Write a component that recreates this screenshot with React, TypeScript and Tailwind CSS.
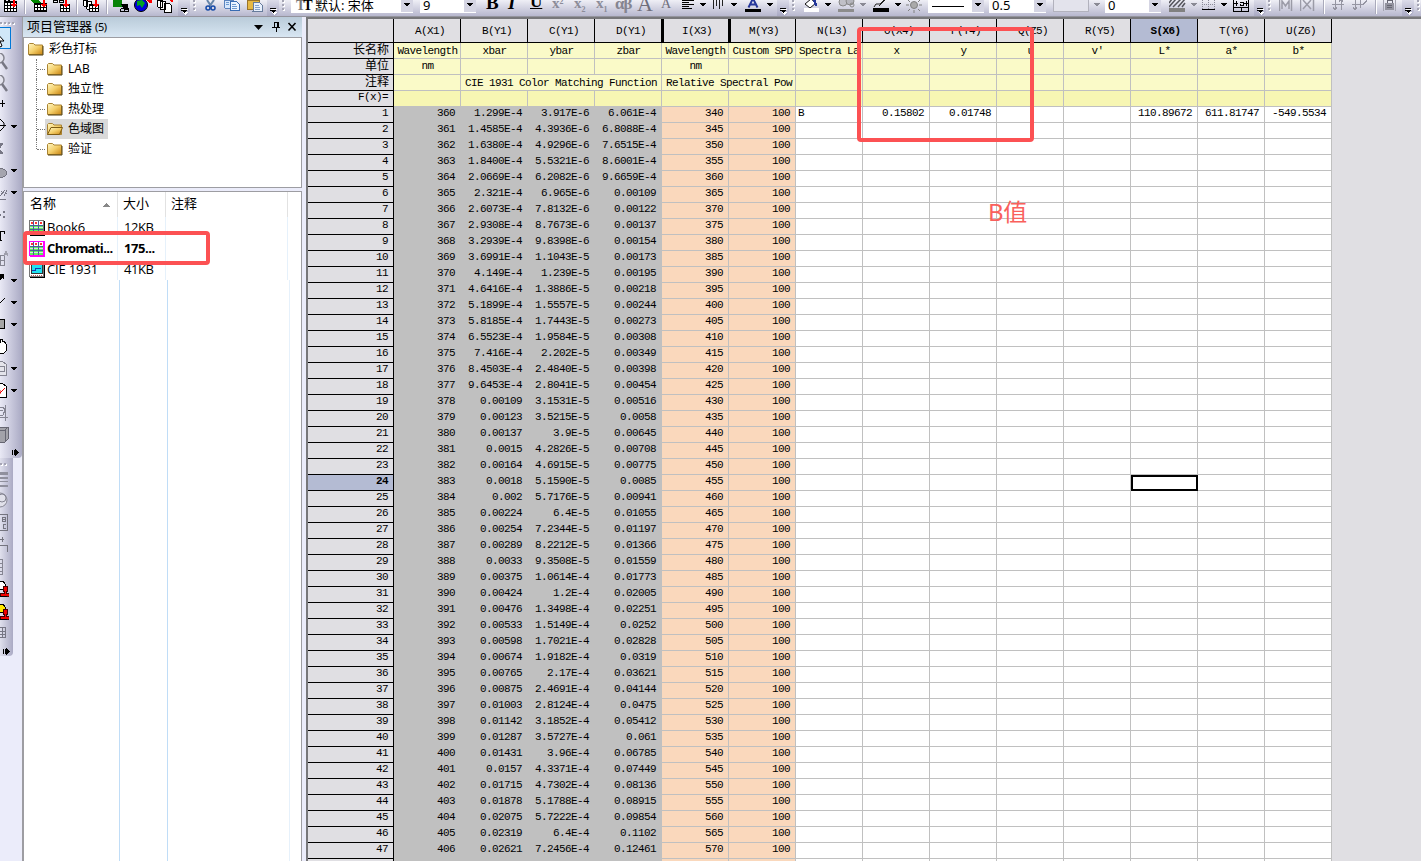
import React from 'react';
import clsx from 'clsx';

type Slot = [number, React.ReactNode];

const cjk = "font-['Noto_Sans','Noto_Sans_CJK_SC',sans-serif]";
const mono = "font-['Liberation_Mono','Noto_Sans_CJK_SC',monospace]";

const xbar = '1.299E-4 1.4585E-4 1.6380E-4 1.8400E-4 2.0669E-4 2.321E-4 2.6073E-4 2.9308E-4 3.2939E-4 3.6991E-4 4.149E-4 4.6416E-4 5.1899E-4 5.8185E-4 6.5523E-4 7.416E-4 8.4503E-4 9.6453E-4 0.00109 0.00123 0.00137 0.0015 0.00164 0.0018 0.002 0.00224 0.00254 0.00289 0.0033 0.00375 0.00424 0.00476 0.00533 0.00598 0.00674 0.00765 0.00875 0.01003 0.01142 0.01287 0.01431 0.0157 0.01715 0.01878 0.02075 0.02319 0.02621'.split(' ');
const ybar = '3.917E-6 4.3936E-6 4.9296E-6 5.5321E-6 6.2082E-6 6.965E-6 7.8132E-6 8.7673E-6 9.8398E-6 1.1043E-5 1.239E-5 1.3886E-5 1.5557E-5 1.7443E-5 1.9584E-5 2.202E-5 2.4840E-5 2.8041E-5 3.1531E-5 3.5215E-5 3.9E-5 4.2826E-5 4.6915E-5 5.1590E-5 5.7176E-5 6.4E-5 7.2344E-5 8.2212E-5 9.3508E-5 1.0614E-4 1.2E-4 1.3498E-4 1.5149E-4 1.7021E-4 1.9182E-4 2.17E-4 2.4691E-4 2.8124E-4 3.1852E-4 3.5727E-4 3.96E-4 4.3371E-4 4.7302E-4 5.1788E-4 5.7222E-4 6.4E-4 7.2456E-4'.split(' ');
const zbar = '6.061E-4 6.8088E-4 7.6515E-4 8.6001E-4 9.6659E-4 0.00109 0.00122 0.00137 0.00154 0.00173 0.00195 0.00218 0.00244 0.00273 0.00308 0.00349 0.00398 0.00454 0.00516 0.0058 0.00645 0.00708 0.00775 0.0085 0.00941 0.01055 0.01197 0.01366 0.01559 0.01773 0.02005 0.02251 0.0252 0.02828 0.0319 0.03621 0.04144 0.0475 0.05412 0.061 0.06785 0.07449 0.08136 0.08915 0.09854 0.1102 0.12461'.split(' ');

const columns = ['A(X1)', 'B(Y1)', 'C(Y1)', 'D(Y1)', 'I(X3)', 'M(Y3)', 'N(L3)', 'O(X4)', 'P(Y4)', 'Q(Z5)', 'R(Y5)', 'S(X6)', 'T(Y6)', 'U(Z6)'];
const longNames = ['Wavelength', 'xbar', 'ybar', 'zbar', 'Wavelength', 'Custom SPD', 'Spectra La', 'x', 'y', 'u', 'v′', 'L*', 'a*', 'b*'];
const units = ['nm', '', '', '', 'nm', '', '', '', '', '', '', '', '', ''];
const firstRow = ['B', '0.15802', '0.01748', '', '', '110.89672', '611.81747', '-549.5534'];

const Svg = ({ w, h = 16, children }: { w: number; h?: number; children: React.ReactNode }) => (
    <svg width={w} height={h} viewBox={`0 0 ${w} ${h}`} className="block shrink-0" fill="none" shapeRendering="crispEdges">
        {children}
    </svg>
);

/* ---- top toolbar pieces ---- */

const RedArrow = ({ x }: { x: number }) => <path d={`M${x + 2} 0h2v4h2l-3 4l-3 -4h2z`} fill="#f00" />;

const SheetGrid = ({ x, y, w, h }: { x: number; y: number; w: number; h: number }) => (
    <g>
        <rect x={x} y={y} width={w} height={h} fill="#000" />
        {Array.from({ length: Math.floor((h - 1) / 3) }).map((_, r) =>
            Array.from({ length: Math.floor((w - 1) / 3) }).map((_, c) => (
                <rect key={`${r}-${c}`} x={x + 1 + c * 3} y={y + 2 + r * 3} width={2} height={2} fill="#fff" />
            ))
        )}
    </g>
);

const Drop = ({ gray = false }) => (
    <Svg w={8}><path d="M0 3h6v1h-1v1h-1v1h-2v-1h-1v-1h-1z" fill={gray ? '#8a8a95' : '#000'} /></Svg>
);

const Overflow = () => (
    <div className="h-[16px] w-[12px] bg-gradient-to-b from-[#dcdce9] to-[#a9a9c3] rounded-br-md">
        <Svg w={12}><path d="M4 9h6v1h-6z M5 12h5l-3 3z" fill="#fff" /><path d="M3 8h6v1h-6z M3 10h6v1h-1l-2 2-2-2h-1z" fill="#000" /></Svg>
    </div>
);

const Grip = () => (
    <Svg w={4}>
        {[0, 4, 8].map(y => <g key={y}><rect x="1" y={y + 1} width="2" height="2" fill="#fff" /><rect y={y} width="2" height="2" fill="#a5a5b4" /></g>)}
    </Svg>
);

const Sep = () => <div className="h-[14px] w-[2px] border-l border-[#aaaabb] border-r border-r-white" />;

const Combo = ({ w, text, gray = false, children }: { w: number; text?: string; gray?: boolean; children?: React.ReactNode }) => (
    <div className={clsx('flex justify-between', gray ? 'h-[12px] bg-[#e3e3ec] border border-t-0 border-[#b2b2bd]' : 'h-[13px] bg-white')} style={{ width: w }}>
        <div className={clsx(cjk, 'flex items-center pl-[3px] text-[13px] leading-[10px] h-[9px] whitespace-pre')}>{children}{text}</div>
        {!gray && <div className="w-[12px] h-[12px] bg-[#d5d5e3] pl-[3px]"><Drop /></div>}
    </div>
);

const Glyph = ({ children, className }: { children: React.ReactNode; className?: string }) => (
    <div className={clsx("font-['Liberation_Serif',serif] whitespace-nowrap h-[16px]", className)}>{children}</div>
);

const topBar: Slot[] = [
    [0, null],
    [2, <Svg w={18}><SheetGrid x={2} y={1} w={13} h={11} /><path d="M2 0h2v1h-2z M6 0h2v1h-2z" fill="#000" /><RedArrow x={9} /></Svg>],
    [24, <Sep />],
    [31, <Svg w={18}><path d="M0 0h8l3 4h-6l-4 -2z" fill="#080" /><SheetGrid x={3} y={3} w={13} h={9} /><RedArrow x={10} /></Svg>],
    [53, <Svg w={18}><path d="M0 0h4v2h-4z M6 0h4v2h-4z" stroke="#000" /><SheetGrid x={7} y={4} w={10} h={8} /><RedArrow x={10} /></Svg>],
    [76, <Sep />],
    [83, <Svg w={18}><path d="M0 0h4v6h-3z M3 1h5v8h-4z" fill="#fff" stroke="#000" /><SheetGrid x={6} y={4} w={10} h={8} /><RedArrow x={10} /></Svg>],
    [106, <Sep />],
    [113, <Svg w={18}><path d="M0 0h9v7h-9z" fill="#078307" /><path d="M8 8h7v3h-8v-2M11 6v6" stroke="#000" /><path d="M8 4h7v6h-4z" fill="#000" /></Svg>],
    [134, <Svg w={20}><g shapeRendering="auto"><circle cx="7" cy="5" r="6.5" fill="#0000df" stroke="#000" /><path d="M3 1l5 -1 3 3-3 5-2-3-3 1z" fill="#00a321" /></g><path d="M13 0h5v3h-3z" fill="#f00" /></Svg>],
    [157, <Svg w={18}><path d="M0 0h5v7h-4z M3 1h5v8h-5z M7 3h5l2 2v7h-7z" fill="#fff" stroke="#000" /><path d="M12 0h4v2h-2z" fill="#f00" /></Svg>],
    [178, <Overflow />],
    [193, <Grip />],
    [204, <Svg w={14}><g shapeRendering="auto"><path d="M3 0l4 6M10 0l-5 7" stroke="#6685a8" strokeWidth="2" /><circle cx="4" cy="8" r="2" stroke="#174ba8" strokeWidth="1.5" /><circle cx="9" cy="8" r="2" stroke="#174ba8" strokeWidth="1.5" /></g></Svg>],
    [224, <Svg w={17}><path d="M0 0h9v8h-8z" fill="#d6e7fc" stroke="#5a83bd" /><path d="M6 1h6l3 3v6h-9z" fill="#eaf3ff" stroke="#386cb2" /><path d="M8 4h4M8 6h5M8 8h5M2 2h3M2 4h3" stroke="#6d9ad0" /></Svg>],
    [246, <Svg w={18}><path d="M1 0h12v9h-12z" fill="#e6b845" stroke="#9b742a" /><path d="M8 2h5l3 3v6h-9z" fill="#e8f0fc" stroke="#667b9b" /><path d="M9 5h4M9 7h5M9 9h5" stroke="#85a2cc" /></Svg>],
    [267, <Overflow />],
    [282, <Grip />],
    [291, <Combo w={122} text="默认: 宋体"><div className="w-[21px] pl-[2px] pt-[2px] font-['Liberation_Serif',serif] font-bold text-[14px] tracking-[-2px]"><span className="text-[#777]">T</span>T</div></Combo>],
    [420, <Combo w={56} text="9" />],
    [486, <Glyph className="text-[19px] leading-[6px] font-bold">B</Glyph>],
    [508, <Glyph className="text-[19px] leading-[6px] font-bold italic">I</Glyph>],
    [530, <Glyph className="text-[17px] leading-[4px] font-bold underline">U</Glyph>],
    [552, <Glyph className="text-[15px] leading-[7px] font-bold text-[#8c8c99]">x<span className="text-[8px] relative -top-1">2</span></Glyph>],
    [574, <Glyph className="text-[15px] leading-[7px] font-bold text-[#8c8c99]">x<span className="text-[8px] relative top-1">2</span></Glyph>],
    [596, <Glyph className="text-[15px] leading-[7px] font-bold text-[#8c8c99]">x<span className="text-[8px] relative top-1">1</span></Glyph>],
    [615, <Glyph className="text-[17px] leading-[7px] font-bold text-[#858591] tracking-[-1px]">αβ</Glyph>],
    [637, <Glyph className="text-[22px] leading-[7px] text-[#6f6f7c]">A</Glyph>],
    [661, <Glyph className="text-[14px] leading-[8px] text-[#6f6f7c]">A</Glyph>],
    [682, <Svg w={14}><path d="M0 .5h12M0 2.5h7M0 4.5h12M0 6.5h7M0 8.5h10" stroke="#000" /></Svg>],
    [700, <Drop />],
    [712, <Svg w={14}><path d="M1.500 0v9M4.500 0v6M7.500 0v9M10.500 0v6" stroke="#222" /></Svg>],
    [731, <Drop />],
    [745, <Svg w={17}><path d="M3.500 7.500l4.500-9 4.500 9M5 4.500h6" stroke="#26379b" strokeWidth="2" shapeRendering="auto" /><path d="M0 9h16v3h-16z" fill="#000" /></Svg>],
    [767, <Drop />],
    [777, <Overflow />],
    [792, <Grip />],
    [803, <Svg w={18}><path d="M2 4l6 -5 5 4-6 5z" fill="#fff" stroke="#111" shapeRendering="auto" /><path d="M10 0h3l1 6h-2z" fill="#243799" /><path d="M1 8h15v4h-15z" fill="#fff" /></Svg>],
    [825, <Drop />],
    [837, <Svg w={20}><g shapeRendering="auto"><circle cx="6" cy="2" r="4" fill="#c0c0c7" stroke="#888" /><circle cx="13" cy="1" r="4" fill="#b5b5bc" stroke="#888" /><circle cx="15" cy="5" r="2" stroke="#888" /></g><path d="M1 9h16v3h-16z" fill="#8c8c8c" /></Svg>],
    [860, <Drop gray />],
    [872, <Svg w={18}><path d="M2 7l2 -3h4l5 -5M7 6l6 -6" stroke="#222" shapeRendering="auto" /><path d="M1 8h16v4h-16z" fill="#000" /></Svg>],
    [895, <Drop />],
    [906, <Svg w={17}><g shapeRendering="auto"><circle cx="8" cy="5" r="3.500" fill="#aaa" stroke="#808080" /><path d="M0 5h3M13 5h3M2 0l2 2M14 0l-2 2M2 11l2-2M14 11l-2-2M8 10v3" stroke="#808080" /></g></Svg>],
    [928, <Combo w={56}><Svg w={34} h={10}><path d="M1 6.500h32" stroke="#000" /></Svg></Combo>],
    [989, <Combo w={57} text="0.5" />],
    [1053, <Combo w={36} gray />],
    [1094, <Drop gray />],
    [1105, <Combo w={56} text="0" />],
    [1169, <Svg w={17}><path d="M0 3l3-4M0 7l7-8M4 7l8-8M9 7l7-8M13 7l3-4" stroke="#55555c" strokeWidth="1.500" shapeRendering="auto" /><path d="M0 8h16v4h-16z" fill="#808080" /></Svg>],
    [1191, <Drop gray />],
    [1202, <Svg w={14}><path d="M.5 0v9M6.500 0v9M12.500 0v9M0 4.500h13" stroke="#8a8a98" strokeDasharray="1 1" /><path d="M0 9.500h13" stroke="#000" /></Svg>],
    [1221, <Drop />],
    [1233, <Svg w={17}><path d="M.5 0v11.500h15v-11.500M0 7.500h16M8 8v4M0 3.500h5M11 3.500h5M3 1v5M13 1v5M7 2.500h3v3h-3v-2" stroke="#000" /></Svg>],
    [1254, <Overflow />],
    [1268, <Grip />],
    [1279, <Svg w={14}><path d="M.5 0v11M12.500 0v11M3 9v-8l3.500 5 3.500-5v8" stroke="#9b9ba7" strokeWidth="1.500" shapeRendering="auto" /></Svg>],
    [1300, <Svg w={16}><path d="M.5 0v11M13.500 0v11M3 0l8 9M11 0l-8 9" stroke="#9b9ba7" strokeWidth="1.500" shapeRendering="auto" /></Svg>],
    [1323, <Sep />],
    [1332, <Svg w={14}><path d="M3 0v10M9 0v10M0 4.500h12M1 7l2 3 2-3M7 2l2-3 2 3" stroke="#9595a2" /></Svg>],
    [1352, <Svg w={18}><path d="M3 0v10M8 0v8M0 4.500h11l4-4M1 7l2 3 2-3" stroke="#9595a2" /></Svg>],
    [1375, <Sep />],
    [1383, <Svg w={15}><path d="M.5 0v11M12.500 0v11" stroke="#a4a4b1" /><path d="M2 3h9v7h-9z" fill="#92929e" /><path d="M4 3v-3h5v3M4 5.500h5M4 7.500h5" stroke="#666672" /></Svg>],
    [1402, <Overflow />],
    [1417, <Grip />],
];

/* ---- left toolbar pieces, keyed by their top ---- */

const Tip = () => <path d="M11 7h6v1h-1v1h-1v1h-2v-1h-1v-1h-1z" fill="#000" />;
const HGrip = ({ n }: { n: number }) => (
    <Svg w={16} h={4}>{Array.from({ length: n }).map((_, i) => <g key={i}><rect x={i * 4 + 1} y="1" width="2" height="2" fill="#fff" /><rect x={i * 4} width="2" height="2" fill="#a5a5b4" /></g>)}</Svg>
);
const Magnifier = () => (
    <Svg w={10} h={18}><g shapeRendering="auto"><circle cx="-1" cy="5" r="5" fill="#e4e4ee" stroke="#84848e" strokeWidth="1.500" /><path d="M2 9l5 7" stroke="#777783" strokeWidth="2.500" /></g></Svg>
);
const More = () => <Svg w={8} h={8}><path d="M0 1h1v5h-1z M2 1h1v5h-1z M3 0l4 3.500-4 3.500z" fill="#000" /></Svg>;
const Stamp = ({ color }: { color: string }) => (
    <Svg w={9} h={17}><path d="M-2 0h5l2 3v5h-7z" fill={color} stroke="#000" /><path d="M3 5h4v5h-1v2h3v3h-9v-3h4v-2h-1z" fill="#f00000" stroke="#400" /><path d="M0 15.500h7" stroke="#000" /></Svg>
);

const leftBar: Slot[] = [
    [0, null],
    [5, <HGrip n={4} />],
    [10, <div className="w-[11px] h-[22px] bg-[#d0e7f8] border border-l-0 border-[#0078d7]"><Svg w={10} h={20}><path d="M-4 0v14l3-3 2 5 2-1-2-5h4z" fill="#fff" stroke="#000" transform="translate(-1 3)" shapeRendering="auto" /></Svg></div>],
    [36, <Magnifier />],
    [58, <Magnifier />],
    [82, <Svg w={8} h={8}><path d="M0 4.500h5M2.500 1v7" stroke="#000" strokeWidth="1" /></Svg>],
    [101, <Svg w={18} h={15}><path d="M-4 1h4l4 4v4l-4 4h-4M-2 7.500h8" stroke="#000" shapeRendering="auto" /><Tip /></Svg>],
    [126, <Svg w={8} h={13}><path d="M-3 1h6M-3 10h6M2 1l-3 5 3 4" stroke="#777785" strokeWidth="1.500" /></Svg>],
    [145, <Svg w={18} h={16}><ellipse cx="0" cy="11" rx="7" ry="4.500" fill="#a5a5ae" stroke="#73737f" /><Tip /></Svg>],
    [167, <Svg w={18} h={17}><path d="M0 12l5-6M4 12l3-6M0 15h6M1 7h1M5 9h2M1 10h1" stroke="#777785" /><Tip /></Svg>],
    [193, <Svg w={8} h={11}><path d="M0 4h1v2h-1z M3 1h2v2h-2z M3 6h2v2h-2z" fill="#777785" /></Svg>],
    [213, <Svg w={8} h={14}><path d="M-5 1h10v3h-1v-2h-3v8h1v1h-4v-1h1v-8h-4z" fill="#000" /></Svg>],
    [233, <Svg w={9} h={17}><path d="M-4 5.500h8v10h-8M-4 10.500h8M.5 5v10" stroke="#858592" /><path d="M4 6l2-5 2 5M5 4h3" stroke="#a0a0ad" /></Svg>],
    [255, <Svg w={18} h={15}><path d="M0 2h4v6l-2-2-2 2z" fill="#000" /><Tip /></Svg>],
    [277, <Svg w={18} h={15}><path d="M-2 8l2 1 5-5" stroke="#000" shapeRendering="auto" /><Tip /></Svg>],
    [299, <Svg w={18} h={15}><path d="M-4 3.500h8v9h-8z" fill="#a5a5a5" stroke="#000" /><Tip /></Svg>],
    [321, <Svg w={8} h={17}><path d="M-2 3l2 1v-3h2v2h2l2 3v7l-2 2h-4l-2-4" fill="#fff" stroke="#000" /></Svg>],
    [343, <Svg w={18} h={17}><path d="M-4 1h6l4 3v11h-10z" fill="#e4e4eb" stroke="#858592" /><path d="M0 6h4v5h-4" stroke="#858592" /><Tip /></Svg>],
    [365, <Svg w={18} h={17}><path d="M-4 1h6l4 3v11h-10z" fill="#fff" stroke="#000" /><path d="M-1 12l6-6M0 8v4" stroke="#f00000" shapeRendering="auto" /><Tip /></Svg>],
    [388, <Svg w={9} h={17}><path d="M5 0v16M0 12.500h8M0 2h3l2 3-2 5h-3M0 5h3" stroke="#858592" /></Svg>],
    [409, <Svg w={9} h={18}><path d="M-4 3l3-2h9v12l-3 3h-9z" fill="#a2a2a9" stroke="#666672" /><path d="M5 4v12M5 4l3-3M0 4h5" stroke="#666672" /></Svg>],
    [432, <div className="pl-[12px]"><More /></div>],
    [441, null],
];

const lowerBar: Slot[] = [
    [0, null],
    [5, <HGrip n={2} />],
    [13, <Svg w={9} h={17}><path d="M0 1h8v3h-8z M0 6h8v2h-8z M0 10h8v1h-8z M0 14h8v2h-8z" fill="#90909d" /></Svg>],
    [34, <Svg w={9} h={18}><g shapeRendering="auto"><circle cx="0" cy="8" r="7" fill="#e1e1ea" stroke="#858592" /><circle cx="2" cy="6" r="4" stroke="#858592" /></g></Svg>],
    [56, <Svg w={9} h={17}><path d="M0 .5h7.500v16h-8M2.500 3v4h3v-4h-3M3 5h2M6 10h-3v4h3" stroke="#74747f" /></Svg>],
    [78, <Svg w={9} h={17}><path d="M0 3.500h4M2 1v5M0 9.500h7.500v6" stroke="#74747f" /></Svg>],
    [101, <Svg w={9} h={17}><path d="M0 .5h2.500v15h-3M0 4h2M0 8h2M0 12h2" stroke="#858592" /></Svg>],
    [123, <Stamp color="#fff" />],
    [146, <Stamp color="#ffe800" />],
    [168, <Svg w={9} h={15}><path d="M0 1.500h5.500v10h-6M0 5h6M0 8h6M2.500 1v10" stroke="#777785" /></Svg>],
    [190, <div className="pl-[3px]"><More /></div>],
    [198, null],
];

const HRow = ({ slots, end }: { slots: Slot[]; end: number }) => (
    <div className="flex">
        {slots.map(([x, node], i) => (
            <div key={i} className="shrink-0" style={{ width: (slots[i + 1]?.[0] ?? end) - x }}>{node}</div>
        ))}
    </div>
);

const VCol = ({ slots }: { slots: Slot[] }) => (
    <div className="flex flex-col">
        {slots.slice(0, -1).map(([y, node], i) => (
            <div key={i} className="shrink-0" style={{ height: slots[i + 1][0] - y }}>{node}</div>
        ))}
    </div>
);

/* ---- project explorer ---- */

const Folder = ({ open = false }) => (
    <svg width="16" height="14" viewBox="0 0 16 14" className="shrink-0">
        <defs>
            <linearGradient id="folder" x1="0" y1="0" x2="1" y2="1">
                <stop offset="0" stopColor="#fff7c4" />
                <stop offset=".5" stopColor="#f4cf6a" />
                <stop offset="1" stopColor="#c98411" />
            </linearGradient>
        </defs>
        <path d="M.5 12.500V2.500l1-1h4l1.500 1.500h7.500v9.500z" fill="url(#folder)" stroke="#a98332" />
        {open ? <path d="M.5 12.500L4 5.500h11.500l-3 7z" fill="url(#folder)" stroke="#7e5c14" /> : <path d="M1 13h14V4" stroke="#54400f" fill="none" />}
    </svg>
);

const folders = ['LAB', '独立性', '热处理', '色域图', '验证'];

const SheetIcon = ({ active = false }) => (
    <Svg w={16} h={16}>
        <rect x="1" y="1" width="15" height="15" fill="#000" />
        <rect x=".5" y=".5" width="14" height="14" fill="#fff" stroke={active ? '#f0f' : '#777'} />
        <path d="M2 2h2v2h-2z M6 2h2v2h-2z M11 2h2v2h-2z" fill="#f33" />
        <path d="M1 5h13v9h-13z" fill="#5cf25c" />
        <path d="M1 7.500h13M1 11.500h13" stroke="#d7dbe8" />
        <path d="M1 5.500h13M1 9.500h13M4.500 1v13M9.500 1v13" stroke="#4a5a9b" />
        {active && <path d="M15.500 0v15.500h-15" stroke="#f0f" />}
    </Svg>
);

const GraphIcon = () => (
    <Svg w={16} h={16}>
        <rect x="1" y="1" width="15" height="15" fill="#000" />
        <rect x=".5" y=".5" width="14" height="14" fill="#fff" stroke="#777" />
        <path d="M2 2h11v9h-11z" fill="#1fe0f0" stroke="#333" />
        <path d="M3 8.500h3v-2h6" stroke="#1538b0" />
        <path d="M2 13h12" stroke="#b55" strokeDasharray="1 1" />
    </Svg>
);

const Explorer = () => (
    <div className="flex w-[279px] shrink-0 flex-col">
        <div className={clsx(cjk, 'flex h-[20px] items-center bg-gradient-to-b from-[#b9cbd9] to-[#d8e6f2] pl-[4px] pb-[2px] text-[13px] leading-none text-black')}>
            <span>项目管理器</span>
            <span className="ml-[3px] mt-px text-[11px] tracking-[-0.4px]">(5)</span>
            <svg width="46" height="12" viewBox="0 0 46 12" fill="none" stroke="#000" className="ml-auto mr-[2px] mt-[2px]">
                <path d="M0 4h9L4.500 9z" fill="#000" stroke="none" />
                <path d="M20 1.500h4v5h-4zM18 6.500h8M22 7v4M23.500 2v4" shapeRendering="crispEdges" />
                <path d="M34.500 2l7 7.500M41.500 2l-7 7.500" strokeWidth="1.600" />
            </svg>
        </div>

        <div className={clsx(cjk, 'h-[151px] border border-[#9d9da2] bg-white pl-[4px] pt-[1px] text-[12px] leading-[20px] text-black')}>
            <div className="flex h-5 items-center gap-[5px]"><Folder />彩色打标</div>
            <div className="ml-[8px]">
                {folders.map((name, i) => (
                    <div key={name} className="flex h-5">
                        <div className={clsx('w-px border-l border-dotted border-[#777]', i === folders.length - 1 ? 'h-[10px]' : 'h-5')} />
                        <div className="mt-[10px] h-px w-[8px] border-t border-dotted border-[#777]" />
                        <div className={clsx('flex h-5 items-center gap-[5px] pl-[2px] pr-[4px]', name === '色域图' && 'bg-[#d9d9d9]')}>
                            <Folder open={name === '色域图'} />
                            {name}
                        </div>
                    </div>
                ))}
            </div>
        </div>

        <div className="mt-[3px] flex flex-1 flex-col border border-b-0 border-[#9d9da2] bg-white">
            <div className={clsx(cjk, 'flex h-[25px] text-[13px] leading-[22px] text-black')}>
                <div className="flex w-[94px] justify-between border-r border-[#e2e2e2] pl-[6px] pr-[7px]">
                    名称
                    <div className="pt-[11px]"><Svg w={8} h={5}><path d="M4 0l4 4h-8z" fill="#888" /></Svg></div>
                </div>
                <div className="w-[48px] border-r border-[#e2e2e2] pl-[5px]">大小</div>
                <div className="w-[122px] border-r border-[#e2e2e2] pl-[5px]">注释</div>
            </div>
            <div className="relative flex h-[63px] text-[13px] leading-[21px] text-black font-['Open_Sans','Noto_Sans',sans-serif]">
                <div className="w-[94px] border-r border-[#e6f1fb] pl-[5px]">
                    <div className="flex h-[21px] items-center gap-[2px]"><SheetIcon />Book6</div>
                    <div className="flex h-[21px] items-center gap-[2px] font-bold tracking-[-0.6px]"><SheetIcon active />Chromati...</div>
                    <div className="flex h-[21px] items-center gap-[2px] tracking-[-0.15px]"><GraphIcon />CIE 1931</div>
                </div>
                <div className="w-[48px] border-r border-[#e6f1fb] pl-[6px] tracking-[-0.45px]">
                    <div>12KB</div>
                    <div className="font-bold">175...</div>
                    <div>41KB</div>
                </div>
                <div className="w-[122px] border-r border-[#e6f1fb]" />
                {/* red highlight over the active book */}
                <div className="absolute left-[-1px] top-[14px] h-[34px] w-[187px] rounded-sm border-4 border-[#fc5153]" />
            </div>
            <div className="flex flex-1">
                <div className="w-[96px] border-r border-[#c0ddf7]" />
                <div className="w-[48px] border-r border-[#c0ddf7]" />
                <div className="w-[122px] border-r border-[#e6f1fb]" />
            </div>
        </div>
    </div>
);

/* ---- worksheet ---- */

const RowHead = ({ children, className }: { children?: React.ReactNode; className?: string }) => (
    <div className={clsx('w-[86px] shrink-0 border-r border-b border-black pr-[5px] text-right', className ?? 'bg-[#e0dfe3]')}>{children}</div>
);

const Label = ({ children }: { children: React.ReactNode }) => (
    <span className={clsx(cjk, 'block text-[12px] tracking-normal leading-[14px] -mr-[1px]')}>{children}</span>
);

const cell = 'h-4 w-[67px] shrink-0 border-r border-b border-[#c0c0c0] whitespace-pre';

const Worksheet = () => (
    <div className={clsx(mono, 'relative flex-1 overflow-hidden border-l-2 border-t-2 border-[#77777a] bg-[#e0dfe3] text-[11px] leading-[13px] tracking-[-0.6px] text-black')}>
        <div className="flex h-6">
            <RowHead />
            {columns.map((c, i) => (
                <div
                    key={c}
                    className={clsx(
                        'w-[67px] shrink-0 border-r border-b border-black pt-[1px] pl-[7px] text-center leading-[22px]',
                        c === 'S(X6)' ? 'bg-[#b4bbd3] font-bold pr-[4px]' : 'pr-[1px]',
                        (i === 4 || i === 5) && 'border-l-2 pr-[5px]'
                    )}
                >
                    {c}
                </div>
            ))}
        </div>

        <div className="flex h-4">
            <RowHead><Label>长名称</Label></RowHead>
            {longNames.map((n, i) => <div key={i} className={clsx(cell, 'bg-[#fafac8] leading-[16px]', i === 6 ? 'pl-[3px]' : 'pl-[1px] text-center')}>{n}</div>)}
        </div>
        <div className="flex h-4">
            <RowHead><Label>单位</Label></RowHead>
            {units.map((n, i) => <div key={i} className={clsx(cell, 'bg-[#fafac8] pl-px text-center leading-[15px]')}>{n}</div>)}
        </div>
        <div className="flex h-4">
            <RowHead><Label>注释</Label></RowHead>
            <div className={clsx(cell, 'bg-[#fafac8]')} />
            <div className="h-4 w-[201px] shrink-0 border-r border-b border-[#c0c0c0] bg-[#fafac8] pl-[4px] leading-[16px]">CIE 1931 Color Matching Function</div>
            <div className="h-4 w-[134px] shrink-0 border-r border-b border-[#c0c0c0] bg-[#fafac8] pl-[4px] leading-[16px]">Relative Spectral Pow</div>
            {columns.slice(6).map(c => <div key={c} className={clsx(cell, 'bg-[#fafac8]')} />)}
        </div>
        <div className="flex h-4">
            <RowHead>F(x)=</RowHead>
            {columns.map(c => <div key={c} className={clsx(cell, 'bg-[#f7f6b3]')} />)}
        </div>

        {Array.from({ length: 48 }).map((_, r) => {
            const values = r < 47
                ? [360 + r, xbar[r], ybar[r], zbar[r], 340 + r * 5, 100, ...(r === 0 ? firstRow : Array(8).fill(''))]
                : Array(14).fill('');
            return (
                <div key={r} className="flex h-4">
                    <RowHead className={r === 23 ? 'bg-[#b4bbd3] font-bold' : undefined}>{r < 47 && r + 1}</RowHead>
                    {values.map((v, i) => (
                        <div
                            key={i}
                            className={clsx(
                                cell,
                                i < 4 ? 'bg-[#c0c0c0]' : i < 6 ? 'bg-[#fad8bc]' : 'bg-white',
                                i === 6 ? 'pl-[2px]' : 'pr-[5px] text-right',
                                r === 23 && i === 11 && 'outline-2 outline-black -outline-offset-2'
                            )}
                        >
                            {v}
                        </div>
                    ))}
                </div>
            );
        })}

        {/* annotation */}
        <div className="absolute left-[549px] top-[8px] h-[115px] w-[177px] rounded-sm border-4 border-[#fc5153]" />
        <div className={clsx(cjk, 'absolute left-[680px] top-[180px] text-[24px] leading-[26px] tracking-[-0.3px] text-[#f9605c]')}>B值</div>
    </div>
);

export default function App() {
    return (
        <div className="flex h-[861px] w-[1421px] flex-col overflow-hidden bg-[#ebecfa]">
            <header className="h-[17px] shrink-0 border-b border-[#94949d] bg-gradient-to-b from-[#efeff6] to-[#b7b7ce]">
                <HRow slots={topBar} end={1421} />
            </header>
            <main className="flex min-h-0 flex-1">
                <aside className="w-[23px] shrink-0 border-r border-[#9d9da2]">
                    <div className="h-[441px] w-[22px] rounded-br bg-gradient-to-r from-[#e9e9f5] to-[#aaaac4] overflow-hidden"><VCol slots={leftBar} /></div>
                    <div className="h-[198px] w-[13px] rounded-br bg-gradient-to-r from-[#e0e0ed] to-[#aaaac4] overflow-hidden"><VCol slots={lowerBar} /></div>
                </aside>
                <Explorer />
                <div className="w-[4px] shrink-0" />
                <Worksheet />
            </main>
        </div>
    );
}
